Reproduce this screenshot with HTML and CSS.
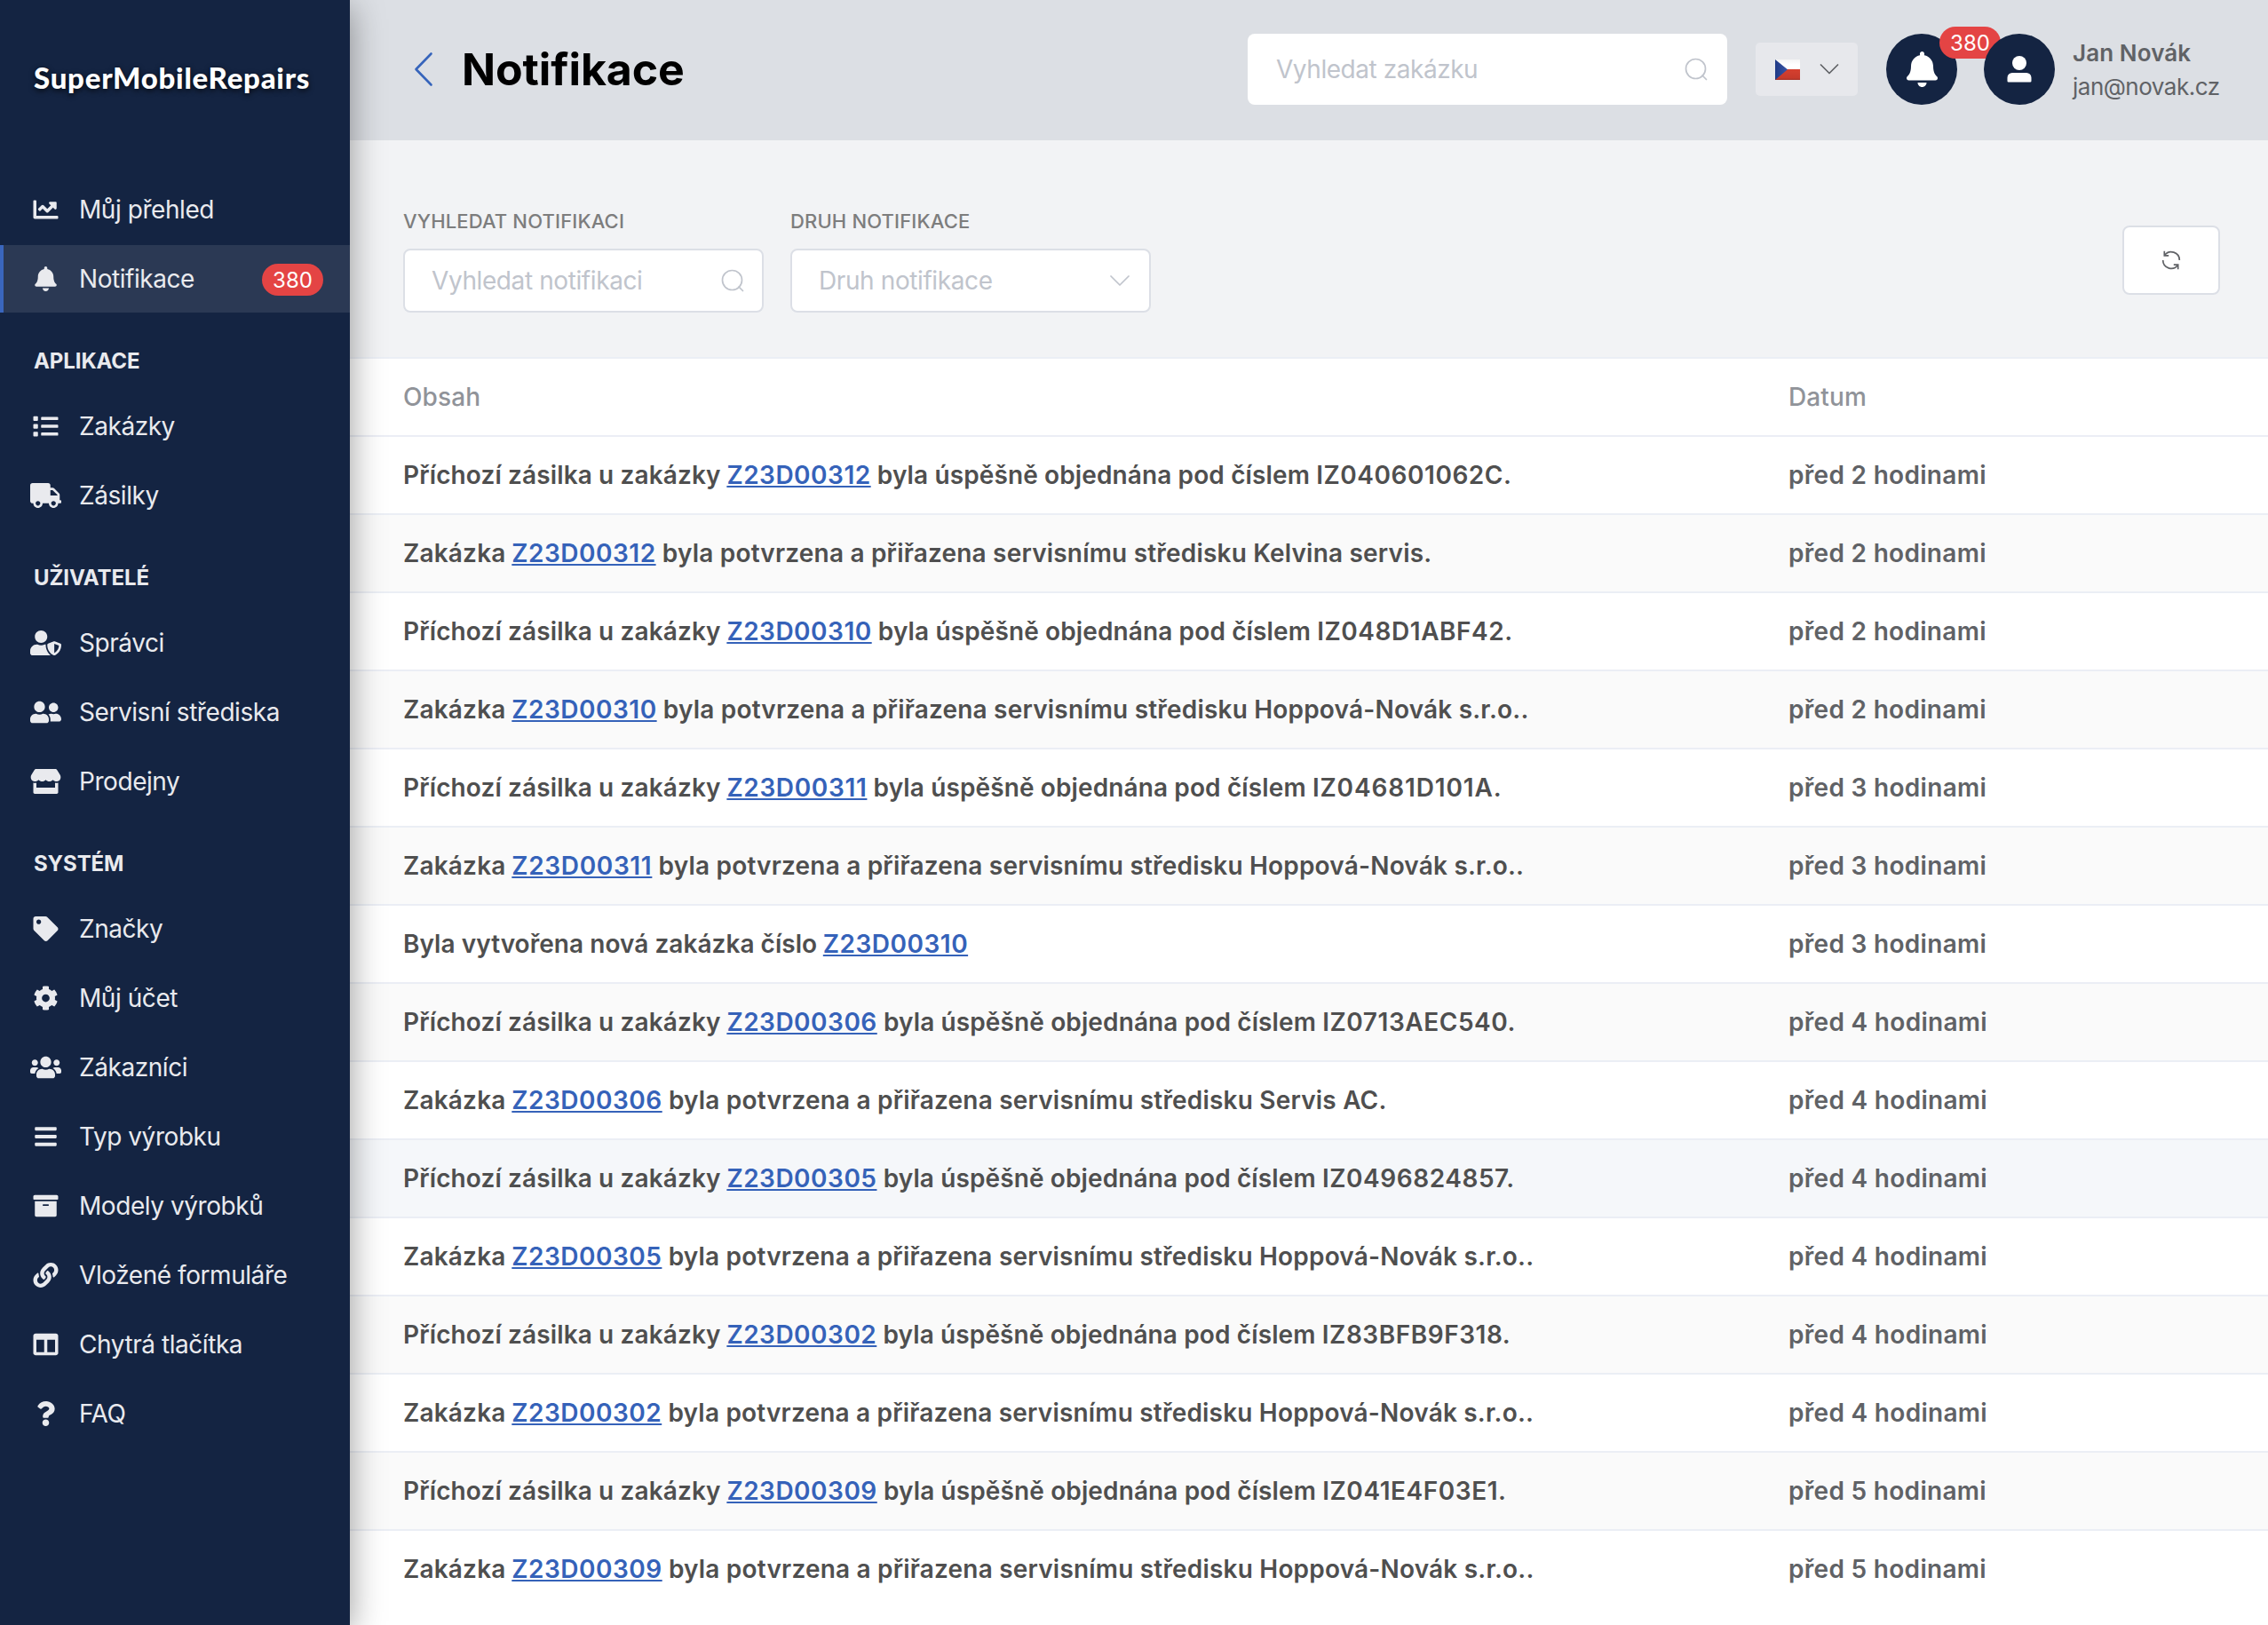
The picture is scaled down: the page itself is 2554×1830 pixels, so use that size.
FILE: index.html
```html
<!DOCTYPE html>
<html lang="cs">
<head>
<meta charset="utf-8">
<title>Notifikace</title>
<link rel="stylesheet" href="styles.css">
</head>
<body>
<div class="app">
  <aside class="sidebar">
    <div class="logo">SuperMobileRepairs</div>
    <nav class="nav">
      <a class="nav-item"><svg class="ico" viewBox="-64 0 640 512"><path d="M496 384H64V80c0-8.84-7.16-16-16-16H16C7.16 64 0 71.16 0 80v336c0 17.67 14.33 32 32 32h464c8.84 0 16-7.16 16-16v-32c0-8.84-7.16-16-16-16zM464 96H345.94c-21.38 0-32.09 25.85-16.97 40.97l32.4 32.4L288 242.75l-73.37-73.37c-12.5-12.5-32.76-12.5-45.25 0l-68.69 68.69c-6.25 6.25-6.25 16.38 0 22.63l22.62 22.62c6.25 6.25 16.38 6.25 22.63 0L192 237.25l73.37 73.37c12.5 12.5 32.76 12.5 45.25 0l96-96 32.4 32.4c15.12 15.12 40.97 4.41 40.97-16.97V112c.01-8.84-7.15-16-16-16z"/></svg><span>Můj přehled</span></a>
      <a class="nav-item active"><svg class="ico" viewBox="-96 0 640 512"><path d="M224 512c35.32 0 63.97-28.65 63.97-64H160.03c0 35.35 28.65 64 63.97 64zm215.39-149.71c-19.32-20.76-55.47-51.99-55.47-154.29 0-77.7-54.48-139.9-127.94-155.16V32c0-17.67-14.32-32-31.98-32s-31.98 14.33-31.98 32v20.84C118.56 68.1 64.08 130.3 64.08 208c0 102.3-36.15 133.53-55.47 154.29-6 6.45-8.66 14.16-8.61 21.71.11 16.4 12.98 32 32.1 32h383.8c19.12 0 32-15.6 32.1-32 .05-7.55-2.61-15.27-8.61-21.71z"/></svg><span>Notifikace</span><b class="badge">380</b></a>
      <h2 class="nav-title">APLIKACE</h2>
      <a class="nav-item"><svg class="ico" viewBox="-64 0 640 512"><path d="M80 368H16a16 16 0 0 0-16 16v64a16 16 0 0 0 16 16h64a16 16 0 0 0 16-16v-64a16 16 0 0 0-16-16zm0-320H16A16 16 0 0 0 0 64v64a16 16 0 0 0 16 16h64a16 16 0 0 0 16-16V64a16 16 0 0 0-16-16zm0 160H16a16 16 0 0 0-16 16v64a16 16 0 0 0 16 16h64a16 16 0 0 0 16-16v-64a16 16 0 0 0-16-16zm416 176H176a16 16 0 0 0-16 16v32a16 16 0 0 0 16 16h320a16 16 0 0 0 16-16v-32a16 16 0 0 0-16-16zm0-320H176a16 16 0 0 0-16 16v32a16 16 0 0 0 16 16h320a16 16 0 0 0 16-16V80a16 16 0 0 0-16-16zm0 160H176a16 16 0 0 0-16 16v32a16 16 0 0 0 16 16h320a16 16 0 0 0 16-16v-32a16 16 0 0 0-16-16z"/></svg><span>Zakázky</span></a>
      <a class="nav-item"><svg class="ico" viewBox="0 0 640 512"><path d="M624 352h-16V243.9c0-12.7-5.1-24.9-14.1-33.9L494 110.1c-9-9-21.2-14.1-33.9-14.1H416V48c0-26.5-21.5-48-48-48H48C21.5 0 0 21.5 0 48v320c0 26.5 21.5 48 48 48h16c0 53 43 96 96 96s96-43 96-96h128c0 53 43 96 96 96s96-43 96-96h48c8.8 0 16-7.2 16-16v-32c0-8.8-7.2-16-16-16zM160 464c-26.5 0-48-21.5-48-48s21.5-48 48-48 48 21.5 48 48-21.5 48-48 48zm320 0c-26.5 0-48-21.5-48-48s21.5-48 48-48 48 21.5 48 48-21.5 48-48 48zm80-208H416V144h44.1l99.9 99.9V256z"/></svg><span>Zásilky</span></a>
      <h2 class="nav-title">UŽIVATELÉ</h2>
      <a class="nav-item"><svg class="ico" viewBox="0 0 640 512"><path d="M622.3 271.1l-115.2-45c-4.1-1.6-12.6-3.7-22.2 0l-115.2 45c-10.7 4.2-17.7 14-17.7 24.9 0 111.6 68.7 188.8 132.9 213.9 9.6 3.7 18 1.6 22.2 0C558.4 489.9 640 420.5 640 296c0-10.9-7-20.7-17.7-24.9zM496 462.4V273.3l95.5 37.3c-5.6 87.1-60.9 135.4-95.5 151.8zM224 256c70.7 0 128-57.3 128-128S294.7 0 224 0 96 57.3 96 128s57.3 128 128 128zm96 40c0-2.5.8-4.8 1.1-7.2-2.5-.1-4.9-.8-7.5-.8h-16.7c-22.2 10.2-46.9 16-72.9 16s-50.6-5.8-72.9-16h-16.7C60.2 288 0 348.2 0 422.4V464c0 26.5 21.5 48 48 48h352c6.8 0 13.3-1.5 19.2-4-54-42.9-99.2-116.7-99.2-212z"/></svg><span>Správci</span></a>
      <a class="nav-item"><svg class="ico" viewBox="0 0 640 512"><path d="M192 256c61.9 0 112-50.1 112-112S253.9 32 192 32 80 82.1 80 144s50.1 112 112 112zm76.8 32h-8.3c-20.8 10-43.9 16-68.5 16s-47.6-6-68.5-16h-8.3C51.6 288 0 339.6 0 403.2V432c0 26.5 21.5 48 48 48h288c26.5 0 48-21.5 48-48v-28.8c0-63.6-51.6-115.2-115.2-115.2zM480 256c53 0 96-43 96-96s-43-96-96-96-96 43-96 96 43 96 96 96zm48 32h-3.8c-13.9 4.8-28.6 8-44.2 8s-30.3-3.2-44.2-8H432c-20.4 0-39.2 5.9-55.7 15.4 24.4 26.3 39.7 61.2 39.7 99.8v38.4c0 2.2-.5 4.3-.6 6.4H592c26.5 0 48-21.5 48-48 0-61.9-50.1-112-112-112z"/></svg><span>Servisní střediska</span></a>
      <a class="nav-item"><svg class="ico" viewBox="-12 0 640 512"><path d="M602 118.6L537.1 15C531.3 5.7 521 0 510 0H106C95 0 84.7 5.7 78.9 15L14 118.6c-33.5 53.5-3.8 127.9 58.8 136.4 4.5.6 9.1.9 13.7.9 29.6 0 55.8-13 73.8-33.1 18 20.1 44.3 33.1 73.8 33.1 29.6 0 55.8-13 73.8-33.1 18 20.1 44.3 33.1 73.8 33.1 29.6 0 55.8-13 73.8-33.1 18.1 20.1 44.3 33.1 73.8 33.1 4.7 0 9.2-.3 13.7-.9 62.8-8.4 92.6-82.8 59-136.4zM529.5 288c-10 0-19.9-1.5-29.5-3.8V384H116v-99.8c-9.6 2.2-19.5 3.8-29.5 3.8-6 0-12.1-.4-18-1.2-5.6-.8-11.1-2.1-16.4-3.6V480c0 17.7 14.3 32 32 32h448c17.7 0 32-14.3 32-32V283.2c-5.4 1.6-10.8 2.9-16.4 3.6-6.1.8-12.1 1.2-18.2 1.2z"/></svg><span>Prodejny</span></a>
      <h2 class="nav-title">SYSTÉM</h2>
      <a class="nav-item"><svg class="ico" viewBox="-64 0 640 512"><path d="M0 252.118V48C0 21.49 21.49 0 48 0h204.118a48 48 0 0 1 33.941 14.059l211.882 211.882c18.745 18.745 18.745 49.137 0 67.882L293.823 497.941c-18.745 18.745-49.137 18.745-67.882 0L14.059 286.059A48 48 0 0 1 0 252.118zM112 64c-26.51 0-48 21.49-48 48s21.49 48 48 48 48-21.49 48-48-21.49-48-48-48z"/></svg><span>Značky</span></a>
      <a class="nav-item"><svg class="ico" viewBox="-64 0 640 512"><path d="M487.4 315.7l-42.6-24.6c4.3-23.2 4.3-47 0-70.2l42.6-24.6c4.9-2.8 7.1-8.6 5.5-14-11.1-35.6-30-67.8-54.7-94.6-3.8-4.1-10-5.1-14.8-2.3L380.8 110c-17.9-15.4-38.5-27.3-60.8-35.1V25.8c0-5.6-3.9-10.5-9.4-11.7-36.7-8.2-74.3-7.8-109.2 0-5.5 1.2-9.4 6.1-9.4 11.7V75c-22.2 7.9-42.8 19.8-60.8 35.1L88.7 85.500c-4.9-2.800-11-1.900-14.800 2.300-24.700 26.700-43.600 58.900-54.700 94.600-1.700 5.400.6 11.200 5.500 14L67.300 221c-4.300 23.200-4.300 47 0 70.200l-42.600 24.600c-4.900 2.800-7.100 8.600-5.500 14 11.100 35.600 30 67.800 54.700 94.600 3.800 4.100 10 5.100 14.800 2.300l42.600-24.600c17.900 15.400 38.500 27.300 60.800 35.100v49.200c0 5.600 3.900 10.500 9.400 11.700 36.700 8.200 74.300 7.800 109.200 0 5.500-1.200 9.400-6.100 9.400-11.700v-49.200c22.200-7.900 42.800-19.800 60.800-35.100l42.600 24.600c4.900 2.800 11 1.900 14.800-2.300 24.700-26.700 43.600-58.900 54.700-94.600 1.500-5.500-.7-11.300-5.600-14.100zM256 336c-44.100 0-80-35.900-80-80s35.900-80 80-80 80 35.900 80 80-35.900 80-80 80z"/></svg><span>Můj účet</span></a>
      <a class="nav-item"><svg class="ico" viewBox="0 0 640 512"><path d="M96 224c35.3 0 64-28.7 64-64s-28.7-64-64-64-64 28.7-64 64 28.7 64 64 64zm448 0c35.3 0 64-28.7 64-64s-28.7-64-64-64-64 28.7-64 64 28.7 64 64 64zm32 32h-64c-17.6 0-33.5 7.1-45.1 18.6 40.3 22.1 68.9 62 75.1 109.4h66c17.7 0 32-14.3 32-32v-32c0-35.3-28.7-64-64-64zm-256 0c61.9 0 112-50.1 112-112S381.9 32 320 32 208 82.1 208 144s50.1 112 112 112zm76.8 32h-8.3c-20.8 10-43.9 16-68.5 16s-47.6-6-68.5-16h-8.3C179.6 288 128 339.6 128 403.2V432c0 26.5 21.5 48 48 48h288c26.5 0 48-21.5 48-48v-28.8c0-63.6-51.6-115.2-115.2-115.2zm-223.7-13.4C161.5 263.1 145.6 256 128 256H64c-35.3 0-64 28.7-64 64v32c0 17.7 14.3 32 32 32h65.9c6.3-47.4 34.9-87.3 75.2-109.4z"/></svg><span>Zákazníci</span></a>
      <a class="nav-item"><svg class="ico" viewBox="-96 0 640 512"><path d="M16 132h416c8.837 0 16-7.163 16-16V76c0-8.837-7.163-16-16-16H16C7.163 60 0 67.163 0 76v40c0 8.837 7.163 16 16 16zm0 160h416c8.837 0 16-7.163 16-16v-40c0-8.837-7.163-16-16-16H16c-8.837 0-16 7.163-16 16v40c0 8.837 7.163 16 16 16zm0 160h416c8.837 0 16-7.163 16-16v-40c0-8.837-7.163-16-16-16H16c-8.837 0-16 7.163-16 16v40c0 8.837 7.163 16 16 16z"/></svg><span>Typ výrobku</span></a>
      <a class="nav-item"><svg class="ico" viewBox="-64 0 640 512"><path d="M32 448c0 17.7 14.3 32 32 32h384c17.7 0 32-14.3 32-32V160H32v288zm160-212c0-6.6 5.4-12 12-12h104c6.6 0 12 5.4 12 12v8c0 6.6-5.4 12-12 12H204c-6.6 0-12-5.4-12-12v-8zM480 32H32C14.3 32 0 46.3 0 64v48c0 8.8 7.2 16 16 16h480c8.8 0 16-7.2 16-16V64c0-17.7-14.3-32-32-32z"/></svg><span>Modely výrobků</span></a>
      <a class="nav-item"><svg class="ico" viewBox="-64 0 640 512"><path d="M326.612 185.391c59.747 59.809 58.927 155.698.36 214.59-.11.12-.24.25-.36.37l-67.2 67.2c-59.27 59.27-155.699 59.262-214.96 0-59.27-59.26-59.27-155.7 0-214.96l37.106-37.106c9.84-9.84 26.786-3.3 27.294 10.606.648 17.722 3.826 35.527 9.69 52.721 1.986 5.822.567 12.262-3.783 16.612l-13.087 13.087c-28.026 28.026-28.905 73.66-1.155 101.96 28.024 28.579 74.086 28.749 102.325.51l67.2-67.19c28.191-28.191 28.073-73.757 0-101.83-3.701-3.694-7.429-6.564-10.341-8.569a16.037 16.037 0 0 1-6.947-12.606c-.396-10.567 3.348-21.456 11.698-29.806l21.054-21.055c5.521-5.521 14.182-6.199 20.584-1.731a152.482 152.482 0 0 1 20.522 17.197zM467.547 44.449c-59.261-59.262-155.69-59.27-214.96 0l-67.2 67.2c-.12.12-.25.25-.36.37-58.566 58.892-59.387 154.781.36 214.59a152.454 152.454 0 0 0 20.521 17.196c6.402 4.468 15.064 3.789 20.584-1.731l21.054-21.055c8.35-8.35 12.094-19.239 11.698-29.806a16.037 16.037 0 0 0-6.947-12.606c-2.912-2.005-6.64-4.875-10.341-8.569-28.073-28.073-28.191-73.639 0-101.83l67.2-67.19c28.239-28.239 74.3-28.069 102.325.51 27.75 28.3 26.872 73.934-1.155 101.96l-13.087 13.087c-4.35 4.35-5.769 10.79-3.783 16.612 5.864 17.194 9.042 34.999 9.69 52.721.509 13.906 17.454 20.446 27.294 10.606l37.106-37.106c59.271-59.259 59.271-155.699.001-214.959z"/></svg><span>Vložené formuláře</span></a>
      <a class="nav-item"><svg class="ico" viewBox="-64 0 640 512"><path d="M464 32H48C21.49 32 0 53.49 0 80v352c0 26.51 21.49 48 48 48h416c26.51 0 48-21.49 48-48V80c0-26.51-21.49-48-48-48zM224 416H64V160h160v256zm224 0H288V160h160v256z"/></svg><span>Chytrá tlačítka</span></a>
      <a class="nav-item"><svg class="ico" viewBox="-128 0 640 512"><path d="M202.021 0C122.202 0 70.503 32.703 29.914 91.026c-7.363 10.58-5.093 25.086 5.178 32.874l43.138 32.709c10.373 7.865 25.132 6.026 33.253-4.148 25.049-31.381 43.63-49.449 82.757-49.449 30.764 0 68.816 19.799 68.816 49.631 0 22.552-18.617 34.134-48.993 51.164-35.423 19.86-82.299 44.576-82.299 106.405V320c0 13.255 10.745 24 24 24h72.471c13.255 0 24-10.745 24-24v-5.773c0-42.86 125.268-44.645 125.268-160.627C377.504 66.256 286.902 0 202.021 0zM192 373.459c-38.196 0-69.271 31.075-69.271 69.271 0 38.195 31.075 69.27 69.271 69.27s69.271-31.075 69.271-69.271-31.075-69.27-69.271-69.27z"/></svg><span>FAQ</span></a>
    </nav>
  </aside>

  <main class="main">
    <header class="header">
      <svg class="back" viewBox="0 0 24 40"><path d="M20.5 2.5 3.5 20l17 17.5"/></svg>
      <h1 class="title">Notifikace</h1>
      <div class="search">
        <span>Vyhledat zakázku</span>
        <svg class="loupe" viewBox="0 0 26 26"><circle cx="12.5" cy="12.5" r="11"/><path d="m20 20 4.5 4.5"/></svg>
      </div>
      <div class="lang">
        <svg class="flag" viewBox="0 0 28 23"><defs><linearGradient id="fw" x2="0" y2="1"><stop offset="0" stop-color="#f4f4f4"/><stop offset=".5" stop-color="#fff"/></linearGradient><linearGradient id="fr" x2="0" y2="1"><stop offset="0" stop-color="#d5402f"/><stop offset=".8" stop-color="#c73a2b"/><stop offset="1" stop-color="#a83328"/></linearGradient><linearGradient id="fb" x2="1" y2="0"><stop offset="0" stop-color="#1f3a86"/><stop offset="1" stop-color="#3a55a5"/></linearGradient></defs><rect width="28" height="11.5" fill="url(#fw)"/><rect y="11" width="28" height="12" fill="url(#fr)"/><path d="M0 0 14 11.2 0 23z" fill="url(#fb)"/></svg>
        <svg class="chev dark" viewBox="0 0 22 12"><path d="m1.5 1 9.5 9.5L20.5 1"/></svg>
      </div>
      <div class="bell"><svg viewBox="0 0 448 512"><path d="M224 512c35.32 0 63.97-28.65 63.97-64H160.03c0 35.35 28.65 64 63.97 64zm215.39-149.71c-19.32-20.76-55.47-51.99-55.47-154.29 0-77.7-54.48-139.9-127.94-155.16V32c0-17.67-14.32-32-31.98-32s-31.98 14.33-31.98 32v20.84C118.56 68.1 64.08 130.3 64.08 208c0 102.3-36.15 133.53-55.47 154.29-6 6.45-8.66 14.16-8.61 21.71.11 16.4 12.98 32 32.1 32h383.8c19.12 0 32-15.6 32.1-32 .05-7.55-2.61-15.27-8.61-21.71z"/></svg><b class="badge float">380</b></div>
      <div class="avatar"><svg viewBox="0 0 28 30"><circle cx="14" cy="8" r="8"/><path d="M.5 28.2V24.5a5.5 5.5 0 0 1 5.500-5.500H22a5.500 5.500 0 0 1 5.500 5.500v3.700a1.300 1.300 0 0 1-1.300 1.300H1.800A1.300 1.300 0 0 1 .5 28.200z"/></svg></div>
      <div class="user"><strong>Jan Novák</strong><span>jan@novak.cz</span></div>
    </header>

    <section class="filters">
      <div class="field">
        <label>VYHLEDAT NOTIFIKACI</label>
        <div class="input"><span>Vyhledat notifikaci</span><svg class="loupe" viewBox="0 0 26 26"><circle cx="12.5" cy="12.5" r="11"/><path d="m20 20 4.5 4.5"/></svg></div>
      </div>
      <div class="field">
        <label>DRUH NOTIFIKACE</label>
        <div class="input"><span>Druh notifikace</span><svg class="chev" viewBox="0 0 22 12"><path d="m1 1 10 10L21 1"/></svg></div>
      </div>
      <button class="refresh"><svg viewBox="-12 -12 24 24"><path d="M-7.500-5.500A9.300 9.300 0 0 1 9.300 0M-9.300 0A9.300 9.300 0 0 0 7.500 5.500M-7.700-10.300V-5.200H-2.800M7.700 10.300V5.200H2.800"/></svg></button>
    </section>

    <section class="table">
      <div class="row head"><div>Obsah</div><div>Datum</div></div>
      <div class="row"><div>Příchozí zásilka u zakázky <a>Z23D00312</a> byla úspěšně objednána pod číslem <i>IZ040601062C.</i></div><div>před 2 hodinami</div></div>
      <div class="row long alt"><div>Zakázka <a>Z23D00312</a> byla potvrzena a přiřazena servisnímu středisku Kelvina servis.</div><div>před 2 hodinami</div></div>
      <div class="row"><div>Příchozí zásilka u zakázky <a>Z23D00310</a> byla úspěšně objednána pod číslem <i>IZ048D1ABF42.</i></div><div>před 2 hodinami</div></div>
      <div class="row long alt"><div>Zakázka <a>Z23D00310</a> byla potvrzena a přiřazena servisnímu středisku Hoppová-Novák s.r.o..</div><div>před 2 hodinami</div></div>
      <div class="row"><div>Příchozí zásilka u zakázky <a class="loose">Z23D00311</a> byla úspěšně objednána pod číslem <i class="loose">IZ04681D101A.</i></div><div>před 3 hodinami</div></div>
      <div class="row long alt"><div>Zakázka <a class="loose">Z23D00311</a> byla potvrzena a přiřazena servisnímu středisku Hoppová-Novák s.r.o..</div><div>před 3 hodinami</div></div>
      <div class="row created"><div>Byla vytvořena nová zakázka číslo <a>Z23D00310</a></div><div>před 3 hodinami</div></div>
      <div class="row alt"><div>Příchozí zásilka u zakázky <a>Z23D00306</a> byla úspěšně objednána pod číslem <i>IZ0713AEC540.</i></div><div>před 4 hodinami</div></div>
      <div class="row long"><div>Zakázka <a>Z23D00306</a> byla potvrzena a přiřazena servisnímu středisku Servis AC.</div><div>před 4 hodinami</div></div>
      <div class="row hover"><div>Příchozí zásilka u zakázky <a>Z23D00305</a> byla úspěšně objednána pod číslem <i>IZ0496824857.</i></div><div>před 4 hodinami</div></div>
      <div class="row long"><div>Zakázka <a>Z23D00305</a> byla potvrzena a přiřazena servisnímu středisku Hoppová-Novák s.r.o..</div><div>před 4 hodinami</div></div>
      <div class="row alt"><div>Příchozí zásilka u zakázky <a>Z23D00302</a> byla úspěšně objednána pod číslem <i>IZ83BFB9F318.</i></div><div>před 4 hodinami</div></div>
      <div class="row long"><div>Zakázka <a>Z23D00302</a> byla potvrzena a přiřazena servisnímu středisku Hoppová-Novák s.r.o..</div><div>před 4 hodinami</div></div>
      <div class="row alt"><div>Příchozí zásilka u zakázky <a>Z23D00309</a> byla úspěšně objednána pod číslem <i>IZ041E4F03E1.</i></div><div>před 5 hodinami</div></div>
      <div class="row long"><div>Zakázka <a>Z23D00309</a> byla potvrzena a přiřazena servisnímu středisku Hoppová-Novák s.r.o..</div><div>před 5 hodinami</div></div>
    </section>
  </main>
</div>
</body>
</html>
```
FILE: styles.css
```css
* { box-sizing: border-box; }
body {
  margin: 0;
  font: 400 28px/1.2 Inter, "Liberation Sans", sans-serif;
  color: #606266;
  background: #fff;
}
svg { display: block; flex: none; }
h1, h2 { margin: 0; }

.app { display: flex; height: 1830px; overflow: hidden; }

/* Sidebar */
.sidebar {
  position: relative;
  z-index: 1;
  flex: none;
  width: 394px;
  background: #142442;
  color: #e9eaee;
  box-shadow: 0 8px 36px rgba(0, 0, 0, .4);
}
.logo {
  height: 198px;
  padding: 67px 0 0 38px;
  font: 900 33px/40px Lato, sans-serif;
  letter-spacing: .75px;
  color: #fff;
  text-shadow: 0 2px 6px rgba(0, 0, 0, .8);
}
.nav-item {
  display: flex;
  align-items: center;
  height: 76px;
  margin-bottom: 2px;
  padding: 0 30px 0 30px;
  border-left: 4px solid transparent;
  letter-spacing: -.44px;
}
.nav-item span { padding-top: 2px; }
.nav-item.active { background: #2b3954; border-left-color: #3a66bd; }
.ico { width: 35px; height: 28px; margin-right: 20px; fill: currentColor; }
.nav-title {
  height: 88px;
  padding: 38px 0 0 38px;
  font-size: 24px;
  line-height: 30px;
  font-weight: 700;
  letter-spacing: -.1px;
}
.badge {
  margin-left: auto;
  width: 69px;
  height: 36px;
  padding-top: 1px;
  border-radius: 18px;
  background: #e44444;
  color: #fff;
  font-weight: 400;
  font-size: 24px;
  line-height: 36px;
  letter-spacing: 0;
  text-align: center;
}
.nav-item .badge { position: relative; top: 1px; }

/* Header */
.main { flex: 1; min-width: 0; }
.header {
  display: flex;
  align-items: center;
  height: 158px;
  padding: 0 54px 2px 71px;
  background: #dcdfe4;
}
.back { width: 24px; height: 40px; fill: none; stroke: #3664bb; stroke-width: 2.6; stroke-linecap: round; stroke-linejoin: round; }
.title { margin-left: 31px; font-size: 50px; line-height: 60px; font-weight: 700; letter-spacing: -.1px; color: #000; }
.search {
  display: flex;
  align-items: center;
  justify-content: space-between;
  width: 540px;
  height: 80px;
  margin-left: auto;
  padding: 0 22px 0 32px;
  border-radius: 8px;
  background: #fff;
  color: #c0c4cc;
  letter-spacing: -.45px;
}
.search span, .input span { padding-top: 2px; }
.loupe { width: 26px; height: 26px; fill: none; stroke: #c0c4cc; stroke-width: 1.7; stroke-linecap: round; }
.lang {
  display: flex;
  align-items: center;
  width: 115px;
  height: 60px;
  margin-left: 32px;
  padding: 0 22px;
  border-radius: 5px;
  background: #e7e8ec;
}
.flag { width: 28px; height: 23px; }
.chev { width: 22px; height: 12px; fill: none; stroke: #c0c4cc; stroke-width: 1.7; stroke-linecap: round; stroke-linejoin: round; }
.chev.dark { margin-left: 22px; stroke: #606266; }
.bell, .avatar {
  position: relative;
  display: flex;
  flex: none;
  align-items: center;
  justify-content: center;
  width: 80px;
  height: 80px;
  border-radius: 50%;
  background: #142442;
  fill: #fff;
}
.bell { margin-left: 32px; }
.bell svg { width: 35px; height: 40px; }
.badge.float { position: absolute; left: 60px; top: -8px; }
.avatar { margin-left: 30px; }
.avatar svg { width: 28px; height: 30px; }
.user { display: flex; flex-direction: column; width: 166px; margin-left: 20px; padding-top: 2px; font-size: 26px; line-height: 38px; white-space: nowrap; letter-spacing: -.5px; }
.user strong { font-weight: 600; letter-spacing: .1px; }

/* Filters */
.filters {
  display: flex;
  gap: 30px;
  height: 244px;
  padding: 76px 54px 0 60px;
  background: #f2f3f5;
}
.field label { display: block; height: 46px; font-size: 22px; line-height: 30px; font-weight: 500; letter-spacing: .15px; color: #7d7d7d; }
.input {
  display: flex;
  align-items: center;
  justify-content: space-between;
  width: 406px;
  height: 72px;
  padding: 0 20px 0 30px;
  border: 2px solid #dcdfe6;
  border-radius: 8px;
  background: #fff;
  color: #c0c4cc;
  letter-spacing: -.4px;
}
.input .chev { margin-right: 2px; }
.refresh {
  display: flex;
  align-items: center;
  justify-content: center;
  width: 110px;
  height: 78px;
  margin: 20px 0 0 auto;
  border: 2px solid #dcdfe6;
  border-radius: 8px;
  background: #fff;
}
.refresh svg { width: 24px; height: 24px; fill: none; stroke: #606266; stroke-width: 1.7; }

/* Notification table */
.table { border-top: 2px solid #ebeef5; }
.row {
  display: grid;
  grid-template-columns: 1560px 1fr;
  align-items: center;
  height: 88px;
  padding: 2px 0 0 60px;
  border-bottom: 2px solid #ebeef5;
  font-weight: 600;
  letter-spacing: .12px;
  white-space: nowrap;
}
.row.long { letter-spacing: .19px; }
.row.created { letter-spacing: .04px; }
.row:last-child { border-bottom-color: transparent; }
.row > :first-child { color: #4f4f4f; }
.row > :last-child { letter-spacing: .3px; }
.row.head { font-weight: 500; }
.row.head > div { color: #909399; letter-spacing: .1px; }
.row.alt { background: #fafafa; }
.row.hover { background: #f5f7fa; }
.row a {
  margin-left: -.5px;
  color: #3562b9;
  letter-spacing: .5px;
  text-decoration: underline;
  text-decoration-thickness: 2px;
  text-underline-offset: 2px;
  text-decoration-skip-ink: none;
}
.row i { font-style: normal; letter-spacing: .55px; }
.row a.loose { letter-spacing: .65px; }
.row i.loose { letter-spacing: .85px; }
```
